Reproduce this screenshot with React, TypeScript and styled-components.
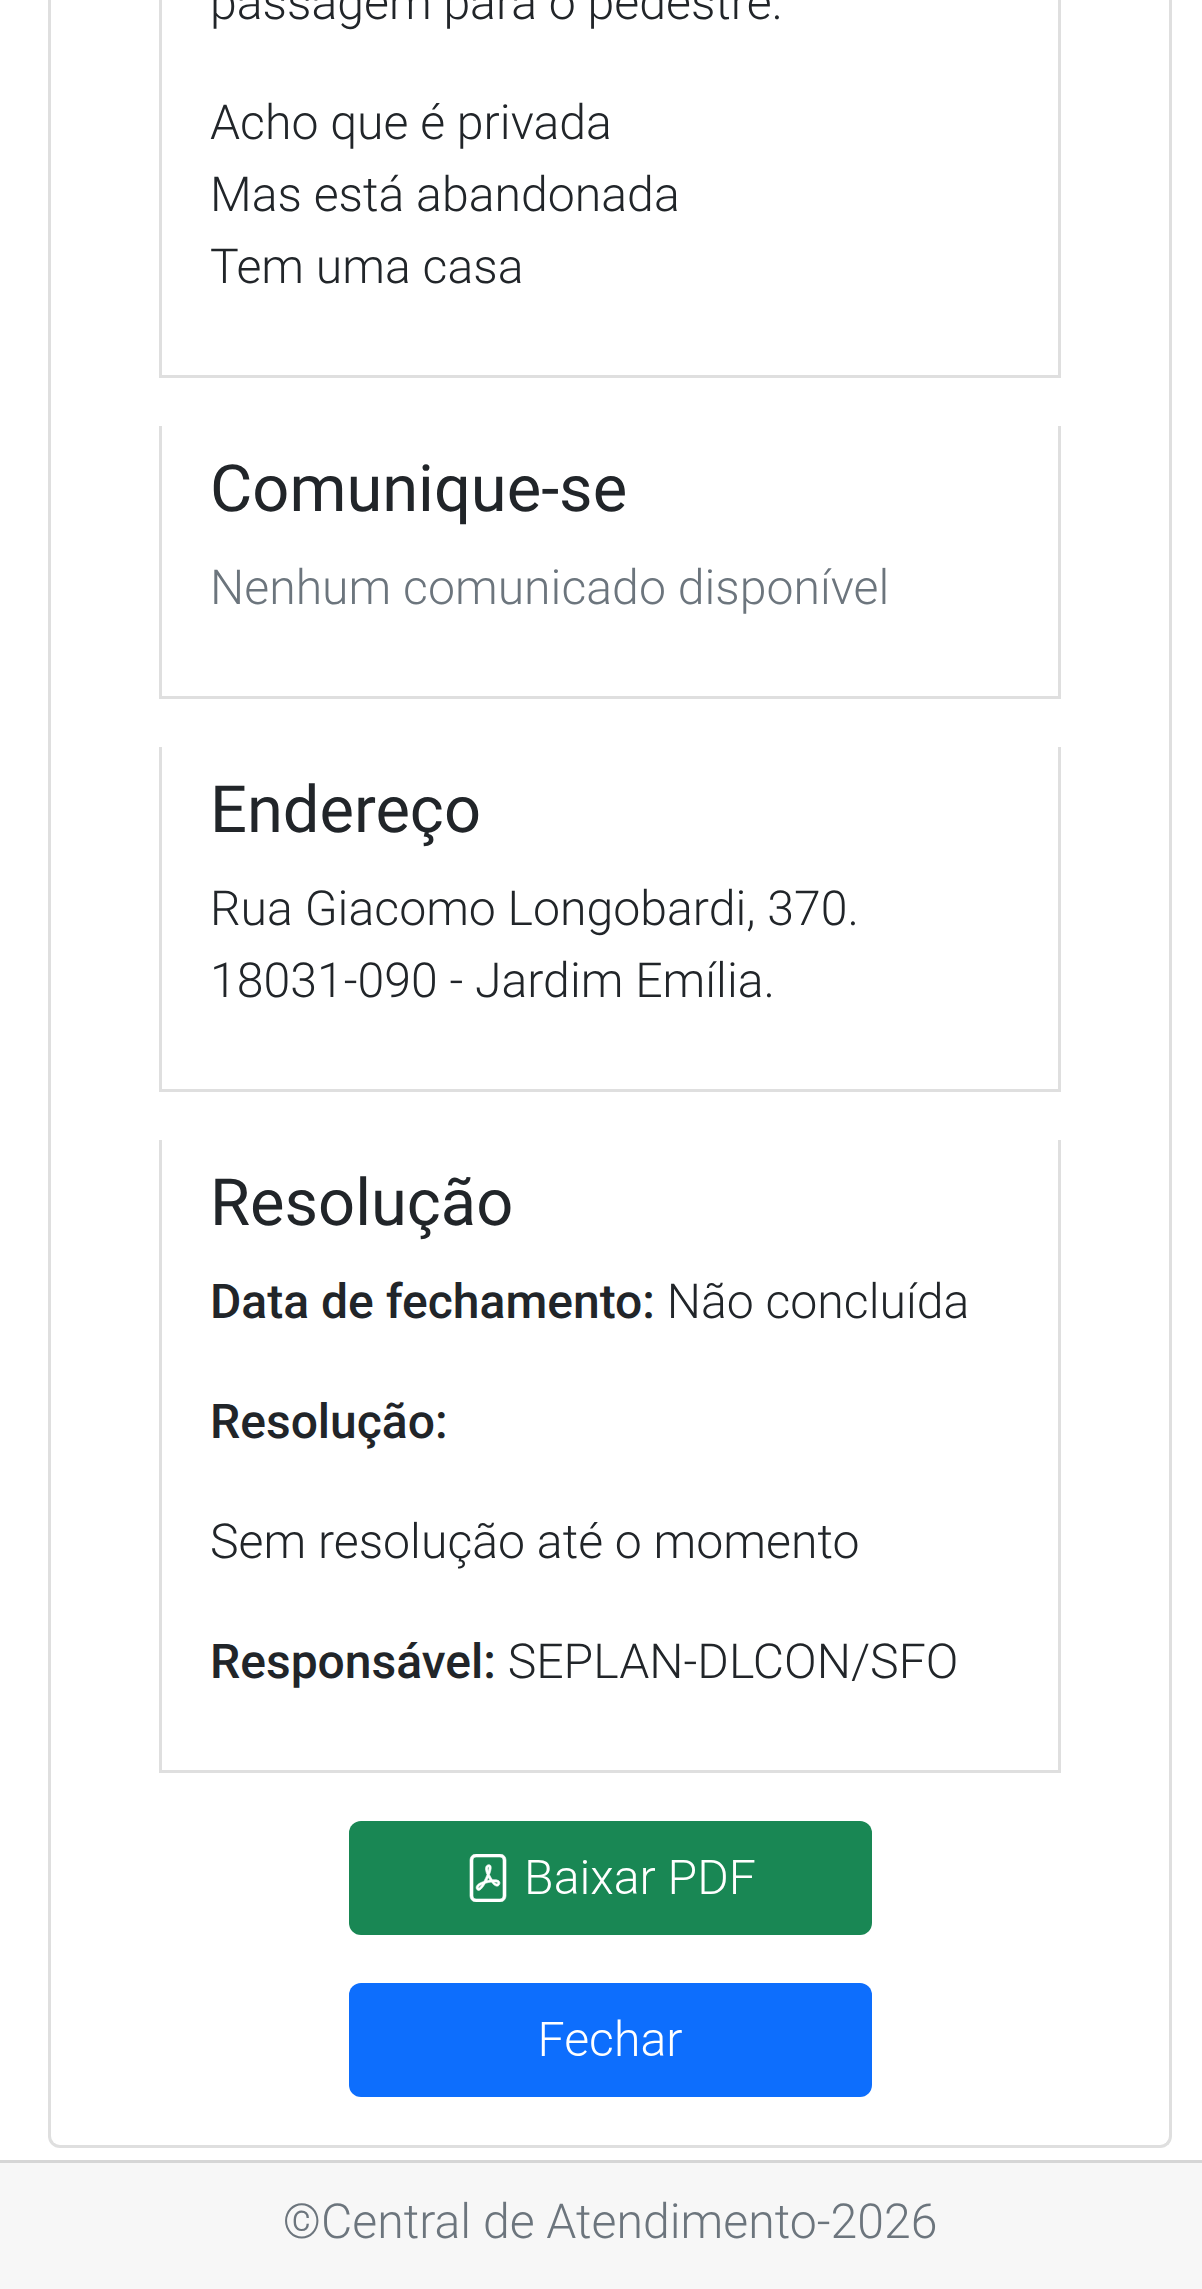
import React from "react";
import { createGlobalStyle, styled } from "styled-components";

const GlobalStyle = createGlobalStyle`
  html, body {
    margin: 0;
    padding: 0;
    background: #fff;
  }
  body {
    font-family: Roboto, "Liberation Sans", sans-serif;
    font-size: 48.2px;
    font-weight: 300;
    line-height: 72px;
    color: #212529;
    text-rendering: geometricPrecision;
  }
`;

const Page = styled.div`
  width: 1202px;
  height: 2289px;
  overflow: hidden;
  display: flex;
  flex-direction: column;
`;

const Main = styled.main`
  flex: 1;
  min-height: 0;
  display: flex;
  flex-direction: column;
  justify-content: flex-end;
  padding: 0 30px 12px 48px;
`;

const OuterCard = styled.div`
  border: 3px solid #dfdfdf;
  border-top: 0;
  border-radius: 0 0 12px 12px;
  padding: 0 108px 48px;
  display: flex;
  flex-direction: column;
  align-items: center;
`;

const Section = styled.section`
  align-self: stretch;
  border-left: 3px solid #dfdfdf;
  border-right: 3px solid #dfdfdf;
  border-bottom: 3px solid #dfdfdf;
  padding: 24px 48px;
  margin-bottom: 48px;
`;

const Title = styled.h4`
  margin: 0 0 24px;
  font-size: 65px;
  font-weight: 400;
  line-height: 78px;
`;

const Para = styled.p<{ $muted?: boolean }>`
  margin: 0 0 48px;
  color: ${(p) => (p.$muted ? "#6c757d" : "#212529")};
`;

const Label = styled.strong`
  font-size: 48px;
  font-weight: 500;
`;

const Button = styled.button<{ $color: string }>`
  width: 523px;
  height: 114px;
  border: 0;
  border-radius: 12px;
  background: ${(p) => p.$color};
  color: #fff;
  font: inherit;
  display: flex;
  align-items: center;
  justify-content: center;
  gap: 12px;
  padding: 0;
`;

const Spaced = styled.div`
  height: 48px;
`;

const Footer = styled.footer`
  height: 129px;
  box-sizing: border-box;
  border-top: 3px solid #d6d6d6;
  background: #f7f7f7;
  color: #6c757d;
  display: flex;
  align-items: center;
  justify-content: center;
  padding: 0 0 8px 18px;
`;

function FilePdfIcon() {
  return (
    <svg
      width="48"
      height="48"
      viewBox="0 0 16 16"
      fill="currentColor"
      stroke="currentColor"
      strokeWidth="0.2"
    >
      <path d="M4 0a2 2 0 0 0-2 2v12a2 2 0 0 0 2 2h8a2 2 0 0 0 2-2V2a2 2 0 0 0-2-2zm0 1h8a1 1 0 0 1 1 1v12a1 1 0 0 1-1 1H4a1 1 0 0 1-1-1V2a1 1 0 0 1 1-1" />
      <path d="M4.603 12.087a.8.8 0 0 1-.438-.42c-.195-.388-.13-.776.08-1.102.198-.307.526-.568.897-.787a7.7 7.7 0 0 1 1.482-.645 20 20 0 0 0 1.062-2.227 7.3 7.3 0 0 1-.43-1.295c-.086-.4-.119-.796-.046-1.136.075-.354.274-.672.65-.823.192-.077.4-.12.602-.077a.7.7 0 0 1 .477.365c.088.164.12.356.127.538.007.187-.012.395-.047.614-.084.51-.27 1.134-.52 1.794a11 11 0 0 0 .98 1.686 5.8 5.8 0 0 1 1.334.05c.364.065.734.195.96.465.12.144.193.32.2.518.007.192-.047.382-.138.563a1.04 1.04 0 0 1-.354.416.86.86 0 0 1-.51.138c-.331-.014-.654-.196-.933-.417a5.7 5.7 0 0 1-.911-.95 11.6 11.6 0 0 0-1.997.406 11.3 11.3 0 0 1-1.021 1.51c-.29.35-.608.655-.926.787a.8.8 0 0 1-.58.029m1.379-1.901q-.25.115-.459.238c-.328.194-.541.383-.647.547-.094.145-.096.25-.04.361q.016.032.026.044l.035-.012c.137-.056.355-.235.635-.572a8 8 0 0 0 .45-.606m1.64-1.33a13 13 0 0 1 1.01-.193 12 12 0 0 1-.51-.858 21 21 0 0 1-.5 1.05zm2.446.45q.226.244.435.41c.24.19.407.253.498.256a.1.1 0 0 0 .07-.015.3.3 0 0 0 .094-.125.44.44 0 0 0 .059-.2.1.1 0 0 0-.026-.063c-.052-.062-.2-.152-.518-.209a4 4 0 0 0-.612-.053zM8.078 5.8a7 7 0 0 0 .2-.828q.046-.282.038-.465a.6.6 0 0 0-.032-.198.5.5 0 0 0-.145.04c-.087.035-.158.106-.196.283-.04.192-.03.469.046.822q.036.167.09.346z" />
    </svg>
  );
}

export default function App() {
  return (
    <Page>
      <GlobalStyle />
      <Main>
        <OuterCard>
          <Section>
            <Para>passagem para o pedestre.</Para>
            <Para>
              Acho que é privada
              <br />
              Mas está abandonada
              <br />
              Tem uma casa
            </Para>
          </Section>

          <Section>
            <Title>Comunique-se</Title>
            <Para $muted>Nenhum comunicado disponível</Para>
          </Section>

          <Section>
            <Title>Endereço</Title>
            <Para>
              Rua Giacomo Longobardi, 370.
              <br />
              18031-090 - Jardim Emília.
            </Para>
          </Section>

          <Section>
            <Title>Resolução</Title>
            <Para>
              <Label>Data de fechamento:</Label> Não concluída
            </Para>
            <Para>
              <Label>Resolução:</Label>
            </Para>
            <Para>Sem resolução até o momento</Para>
            <Para>
              <Label>Responsável:</Label> SEPLAN-DLCON/SFO
            </Para>
          </Section>

          <Button $color="#198754">
            <FilePdfIcon />
            Baixar PDF
          </Button>
          <Spaced />
          <Button $color="#0d6efd">Fechar</Button>
        </OuterCard>
      </Main>
      <Footer>©Central de Atendimento-2026</Footer>
    </Page>
  );
}
